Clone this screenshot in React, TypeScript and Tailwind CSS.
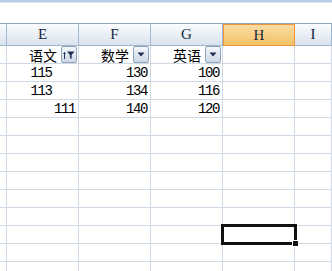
import React from "react";

const cols = ["", "E", "F", "G", "H", "I"];

function FilterButton({ sorted }: { sorted?: boolean }) {
  return (
    <div className="absolute right-[1px] top-0 w-[16px] h-[17px] rounded-[2px] border border-[#8fa3bd] bg-gradient-to-b from-[#f4f7fb] to-[#cdd8e6] flex items-center justify-center">
      {sorted ? (
        <svg width="12" height="10" viewBox="0 0 12 10">
          <path d="M1.5 9V2.5" stroke="#1d2f52" strokeWidth="1" />
          <path d="M0 4l1.5-2 1.5 2z" fill="#1d2f52" />
          <path d="M4 1.5h7.5L8.6 5v4L6.9 8V5z" fill="#1d2f52" />
        </svg>
      ) : (
        <svg width="8" height="5" viewBox="0 0 8 5">
          <path d="M0.5 0.5h7L4 4.5z" fill="#1d2f52" />
        </svg>
      )}
    </div>
  );
}

type Cell = { text?: string; align?: "left" | "center" | "right"; filter?: "plain" | "sorted" };

const rows: Cell[][] = [
  [{}, { text: "语文", align: "right", filter: "sorted" }, { text: "数学", align: "right", filter: "plain" }, { text: "英语", align: "right", filter: "plain" }, {}, {}],
  [{}, { text: "115", align: "center" }, { text: "130", align: "right" }, { text: "100", align: "right" }, {}, {}],
  [{}, { text: "113", align: "center" }, { text: "134", align: "right" }, { text: "116", align: "right" }, {}, {}],
  [{}, { text: "111", align: "right" }, { text: "140", align: "right" }, { text: "120", align: "right" }, {}, {}],
];

export default function App() {
  const allRows: Cell[][] = [...rows];
  while (allRows.length < 13) allRows.push([{}, {}, {}, {}, {}, {}]);

  return (
    <div className="relative w-[332px] h-[271px] overflow-hidden bg-white">
      <div className="h-[2px] bg-[#b9cde6]" />
      <div className="h-[1px] bg-[#dbe6f3]" />
      <div className="h-[20px] bg-white" />
      <div className="h-[1px] bg-[#8fa6c3]" />

      <div className="grid grid-cols-[7px_72px_72px_72px_72px_1fr]">
        {cols.map((c, i) =>
          c === "H" ? (
            <div
              key={i}
              className="h-[22px] border border-[#f29536] bg-gradient-to-b from-[#f9dba4] to-[#f2c366] flex items-center justify-center text-[15px] font-normal text-[#15283d] font-[family-name:Liberation_Serif,serif]"
            >
              {c}
            </div>
          ) : (
            <div
              key={i}
              className="h-[22px] border-r border-b border-[#9eb6ce] bg-gradient-to-b from-[#fafcfe] to-[#dae3ee] flex items-center justify-center text-[15px] font-normal text-[#15283d] font-[family-name:Liberation_Serif,serif]"
            >
              {c}
            </div>
          )
        )}

        {allRows.map((r, ri) =>
          r.map((cell, ci) => (
            <div
              key={`${ri}-${ci}`}
              className={
                "relative h-[18px] border-r border-b border-[#d0d7e5] flex items-center text-black " +
                (cell.align === "center"
                  ? "justify-center "
                  : cell.align === "right"
                  ? "justify-end "
                  : "justify-start ") +
                (cell.filter ? "pr-[21px] " : "pr-[3px] ")
              }
            >
              {cell.text && (
                <span
                  className={
                    cell.filter
                      ? "text-[14px] leading-none font-[family-name:Noto_Sans_CJK_SC,sans-serif]"
                      : "text-[14px] leading-none tracking-[-1.4px] font-[family-name:Liberation_Mono,monospace]"
                  }
                >
                  {cell.text}
                </span>
              )}
              {cell.filter && <FilterButton sorted={cell.filter === "sorted"} />}
            </div>
          ))
        )}
      </div>

      {/* active cell */}
      <div className="absolute left-[221px] top-[224px] w-[76px] h-[21px] border-[3px] border-[#111]" />
      <div className="absolute left-[292px] top-[240px] w-[7px] h-[7px] bg-[#111] border border-white" />
    </div>
  );
}
